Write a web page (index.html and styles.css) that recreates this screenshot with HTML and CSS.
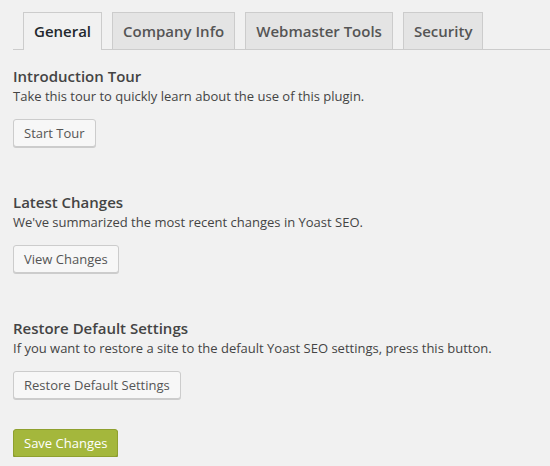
FILE: index.html
```html
<!DOCTYPE html>
<html>
<head>
<meta charset="utf-8">
<link rel="stylesheet" href="styles.css">
</head>
<body>
<div class="wrap">
  <nav class="tabs">
    <span class="tab active">General</span>
    <span class="tab">Company Info</span>
    <span class="tab">Webmaster Tools</span>
    <span class="tab">Security</span>
  </nav>
  <section class="section">
    <h3 class="title">Introduction Tour</h3>
    <p class="desc">Take this tour to quickly learn about the use of this plugin.</p>
    <button class="btn">Start Tour</button>
  </section>
  <section class="section">
    <h3 class="title">Latest Changes</h3>
    <p class="desc">We've summarized the most recent changes in Yoast SEO.</p>
    <button class="btn">View Changes</button>
  </section>
  <section class="section">
    <h3 class="title">Restore Default Settings</h3>
    <p class="desc">If you want to restore a site to the default Yoast SEO settings, press this button.</p>
    <button class="btn">Restore Default Settings</button>
  </section>
  <div class="submit">
    <button class="btn primary">Save Changes</button>
  </div>
</div>
</body>
</html>
```
FILE: styles.css
```css
html, body {
  margin: 0;
  padding: 0;
  background: #f1f1f1;
}
body {
  font-family: "Open Sans", "DejaVu Sans", sans-serif;
  color: #444;
  font-size: 13px;
}
.wrap {
  padding: 12px 0 0 13px;
}
.tabs {
  display: flex;
  gap: 10px;
  padding-left: 10px;
  border-bottom: 1px solid #ccc;
  height: 37px;
}
.tab {
  box-sizing: border-box;
  height: 37px;
  padding: 6px 10px;
  font-size: 15px;
  line-height: 24px;
  font-weight: 600;
  color: #555;
  background: #e4e4e4;
  border: 1px solid #ccc;
  border-bottom: none;
}
.tab.active {
  background: #f1f1f1;
  color: #23282d;
  height: 38px;
}
.section {
  margin: 0;
}
.title {
  margin: 0;
  padding-top: 16px;
  font-size: 15px;
  line-height: 20px;
  font-weight: 600;
  color: #444;
}
.section + .section .title {
  padding-top: 45px;
}
.desc {
  margin: 0 0 13px;
  font-size: 13px;
  line-height: 20px;
}
.btn {
  box-sizing: border-box;
  display: block;
  height: 28px;
  margin: 0;
  padding: 0 10px 1px;
  font-family: "Open Sans", "DejaVu Sans", sans-serif;
  font-size: 13px;
  line-height: 26px;
  color: #555;
  background: #f7f7f7;
  border: 1px solid #ccc;
  border-radius: 3px;
  box-shadow: 0 1px 0 #ccc;
}
.submit {
  padding-top: 30px;
}
.btn.primary {
  background: #a4b73c;
  border-color: #8fa02f;
  color: #fff;
  box-shadow: 0 1px 0 #7f8f28;
}
```
